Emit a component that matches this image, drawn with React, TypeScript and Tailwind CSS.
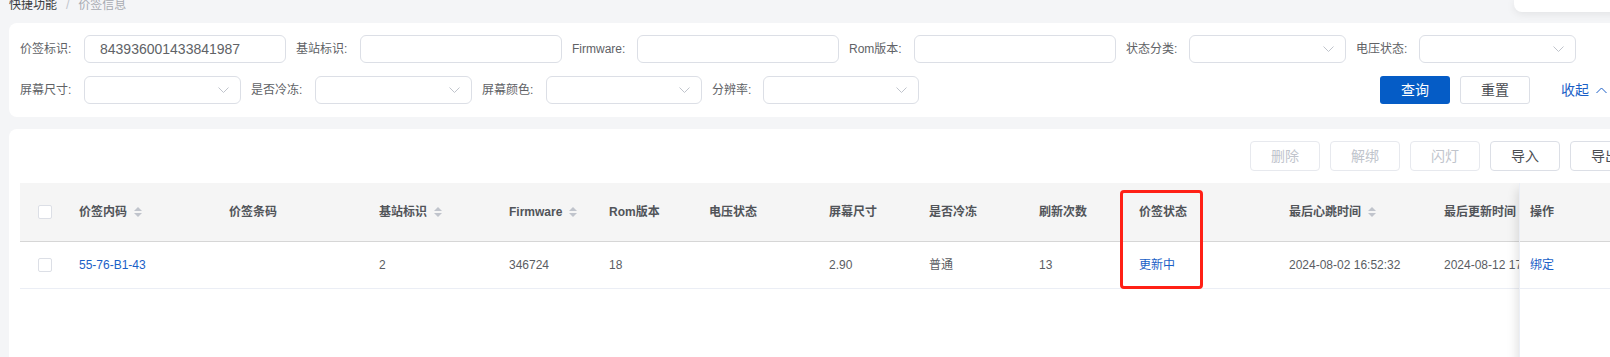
import React from "react";

function ChevronDown() {
  return (
    <svg width="11" height="6" viewBox="0 0 11 6" fill="none">
      <path d="M0.5 0.5 L5.5 5.5 L10.5 0.5" stroke="#c0c4cc" strokeWidth="1" />
    </svg>
  );
}

function SortIcon() {
  return (
    <svg width="10" height="12" viewBox="0 0 10 12" className="ml-[6px] shrink-0">
      <path d="M1 5 L5 1 L9 5 Z" fill="#c0c4cc" />
      <path d="M1 7 L5 11 L9 7 Z" fill="#c0c4cc" />
    </svg>
  );
}

function Label({ w, children }: { w: string; children: React.ReactNode }) {
  return <span className={`${w} shrink-0 text-[12px] leading-[14px] text-[#606266]`}>{children}</span>;
}

function TextBox({ w, value }: { w: string; value?: string }) {
  return (
    <div className={`${w} h-[28px] shrink-0 border border-[#dcdfe6] rounded-[6px] bg-white flex items-center pl-[15px] text-[14px] text-[#606266]`}>
      {value}
    </div>
  );
}

function SelectBox({ w }: { w: string }) {
  return (
    <div className={`${w} h-[28px] shrink-0 border border-[#dcdfe6] rounded-[6px] bg-white flex items-center justify-end pr-[11px]`}>
      <ChevronDown />
    </div>
  );
}

function Checkbox() {
  return <div className="w-[14px] h-[14px] border border-[#dcdfe6] rounded-[2px] bg-white" />;
}

function ActionBtn({ label, disabled }: { label: string; disabled?: boolean }) {
  return (
    <div
      className={`w-[70px] h-[30px] rounded-[4px] border flex items-center justify-center text-[14px] bg-white ${
        disabled ? "border-[#e7e9ee] text-[#c0c4cc]" : "border-[#dcdfe6] text-[#4a4d52]"
      }`}
    >
      {label}
    </div>
  );
}

type Col = { title: string; w: string; sort?: boolean; value?: string; blue?: boolean };

const cols: Col[] = [
  { title: "价签内码", w: "w-[150px]", sort: true, value: "55-76-B1-43", blue: true },
  { title: "价签条码", w: "w-[150px]" },
  { title: "基站标识", w: "w-[130px]", sort: true, value: "2" },
  { title: "Firmware", w: "w-[100px]", sort: true, value: "346724" },
  { title: "Rom版本", w: "w-[100px]", value: "18" },
  { title: "电压状态", w: "w-[120px]" },
  { title: "屏幕尺寸", w: "w-[100px]", value: "2.90" },
  { title: "是否冷冻", w: "w-[110px]", value: "普通" },
  { title: "刷新次数", w: "w-[100px]", value: "13" },
  { title: "价签状态", w: "w-[150px]", value: "更新中", blue: true },
  { title: "最后心跳时间", w: "w-[155px]", sort: true, value: "2024-08-02 16:52:32" },
  { title: "最后更新时间", w: "w-[200px]", sort: true, value: "2024-08-12 17:35:08" },
];

export default function App() {
  return (
    <div className="relative w-[1610px] h-[357px] overflow-hidden bg-[#f4f5f7] font-['Liberation_Sans','Noto_Sans_CJK_SC',sans-serif] flex flex-col">
      {/* breadcrumb */}
      <div className="h-[23px] shrink-0 flex items-start pl-[9px] text-[12px] leading-[12px]">
        <div className="flex mt-[-1px]">
          <span className="text-[#3a3c40]">快捷功能</span>
          <span className="mx-[9px] text-[#c0c4cc]">/</span>
          <span className="text-[#a8abb2]">价签信息</span>
        </div>
      </div>

      {/* filter card */}
      <div className="ml-[9px] w-[1642px] shrink-0 bg-white rounded-[8px] pt-[12px] pb-[13px] pl-[11px] flex flex-col gap-[13px]">
        <div className="flex items-center gap-[10px] h-[28px]">
          <div className="flex items-center">
            <Label w="w-[64px]">价签标识:</Label>
            <TextBox w="w-[202px]" value="843936001433841987" />
          </div>
          <div className="flex items-center">
            <Label w="w-[64px]">基站标识:</Label>
            <TextBox w="w-[202px]" />
          </div>
          <div className="flex items-center">
            <Label w="w-[65px]">Firmware:</Label>
            <TextBox w="w-[202px]" />
          </div>
          <div className="flex items-center">
            <Label w="w-[65px]">Rom版本:</Label>
            <TextBox w="w-[202px]" />
          </div>
          <div className="flex items-center">
            <Label w="w-[63px]">状态分类:</Label>
            <SelectBox w="w-[157px]" />
          </div>
          <div className="flex items-center">
            <Label w="w-[63px]">电压状态:</Label>
            <SelectBox w="w-[157px]" />
          </div>
        </div>
        <div className="flex items-center h-[28px] pr-[44px]">
          <div className="flex items-center gap-[10px]">
            <div className="flex items-center">
              <Label w="w-[64px]">屏幕尺寸:</Label>
              <SelectBox w="w-[157px]" />
            </div>
            <div className="flex items-center">
              <Label w="w-[64px]">是否冷冻:</Label>
              <SelectBox w="w-[157px]" />
            </div>
            <div className="flex items-center">
              <Label w="w-[64px]">屏幕颜色:</Label>
              <SelectBox w="w-[156px]" />
            </div>
            <div className="flex items-center">
              <Label w="w-[51px]">分辨率:</Label>
              <SelectBox w="w-[156px]" />
            </div>
          </div>
          <div className="ml-auto flex items-center">
            <div className="w-[70px] h-[28px] rounded-[3px] bg-[#055cc6] text-white text-[14px] flex items-center justify-center">
              查询
            </div>
            <div className="ml-[10px] w-[70px] h-[28px] rounded-[3px] border border-[#dcdfe6] bg-white text-[#4a4d52] text-[14px] flex items-center justify-center">
              重置
            </div>
            <div className="ml-[31px] flex items-center text-[14px] text-[#1a5fc7]">
              <span>收起</span>
              <svg width="11" height="7" viewBox="0 0 11 7" fill="none" className="ml-[7px]">
                <path d="M0.5 6 L5.5 1 L10.5 6" stroke="#1a5fc7" strokeWidth="1" />
              </svg>
            </div>
          </div>
        </div>
      </div>

      {/* table card */}
      <div className="mt-[12px] ml-[9px] w-[1642px] flex-1 bg-white rounded-t-[8px] px-[11px] pt-[12px] flex flex-col">
        <div className="flex justify-end gap-[10px] h-[30px] shrink-0">
          <ActionBtn label="删除" disabled />
          <ActionBtn label="解绑" disabled />
          <ActionBtn label="闪灯" disabled />
          <ActionBtn label="导入" />
          <ActionBtn label="导出" />
        </div>

        <div className="relative mt-[12px] h-[220px] overflow-hidden">
          {/* header */}
          <div className="flex h-[59px] bg-[#f5f5f5] border-b border-[#d6d6d6]">
            <div className="w-[49px] shrink-0 pl-[18px] flex items-center">
              <Checkbox />
            </div>
            {cols.map((c) => (
              <div key={c.title} className={`${c.w} shrink-0 pl-[10px] flex items-center text-[12px] font-bold text-[#515459] whitespace-nowrap`}>
                <span>{c.title}</span>
                {c.sort && <SortIcon />}
              </div>
            ))}
          </div>
          {/* row */}
          <div className="flex h-[47px] border-b border-[#ebeef5]">
            <div className="w-[49px] shrink-0 pl-[18px] flex items-center">
              <Checkbox />
            </div>
            {cols.map((c) => (
              <div
                key={c.title}
                className={`${c.w} shrink-0 pl-[10px] flex items-center text-[12px] whitespace-nowrap ${
                  c.blue ? "text-[#1a5fc7]" : "text-[#5a5d63]"
                }`}
              >
                {c.value}
              </div>
            ))}
          </div>

          {/* fixed operation column */}
          <div className="absolute top-0 right-0 bottom-0 w-[121px] bg-white border-l border-[#ebeef5] shadow-[-8px_0_10px_-6px_rgba(0,0,0,0.12)] flex flex-col">
            <div className="h-[59px] bg-[#f5f5f5] border-b border-[#d6d6d6] pl-[10px] flex items-center text-[12px] font-bold text-[#515459]">
              操作
            </div>
            <div className="h-[47px] border-b border-[#ebeef5] pl-[10px] flex items-center text-[12px] text-[#1a5fc7]">
              绑定
            </div>
          </div>

          {/* annotation box */}
          <div className="absolute left-[1100px] top-[7px] w-[83px] h-[99px] border-[3px] border-[#ff2016] rounded-[4px]" />
        </div>
      </div>

      {/* top-right popover edge */}
      <div className="absolute left-[1514px] top-0 w-[130px] h-[12px] bg-white rounded-bl-[8px] shadow-[0_2px_8px_rgba(0,0,0,0.08)]" />
    </div>
  );
}
